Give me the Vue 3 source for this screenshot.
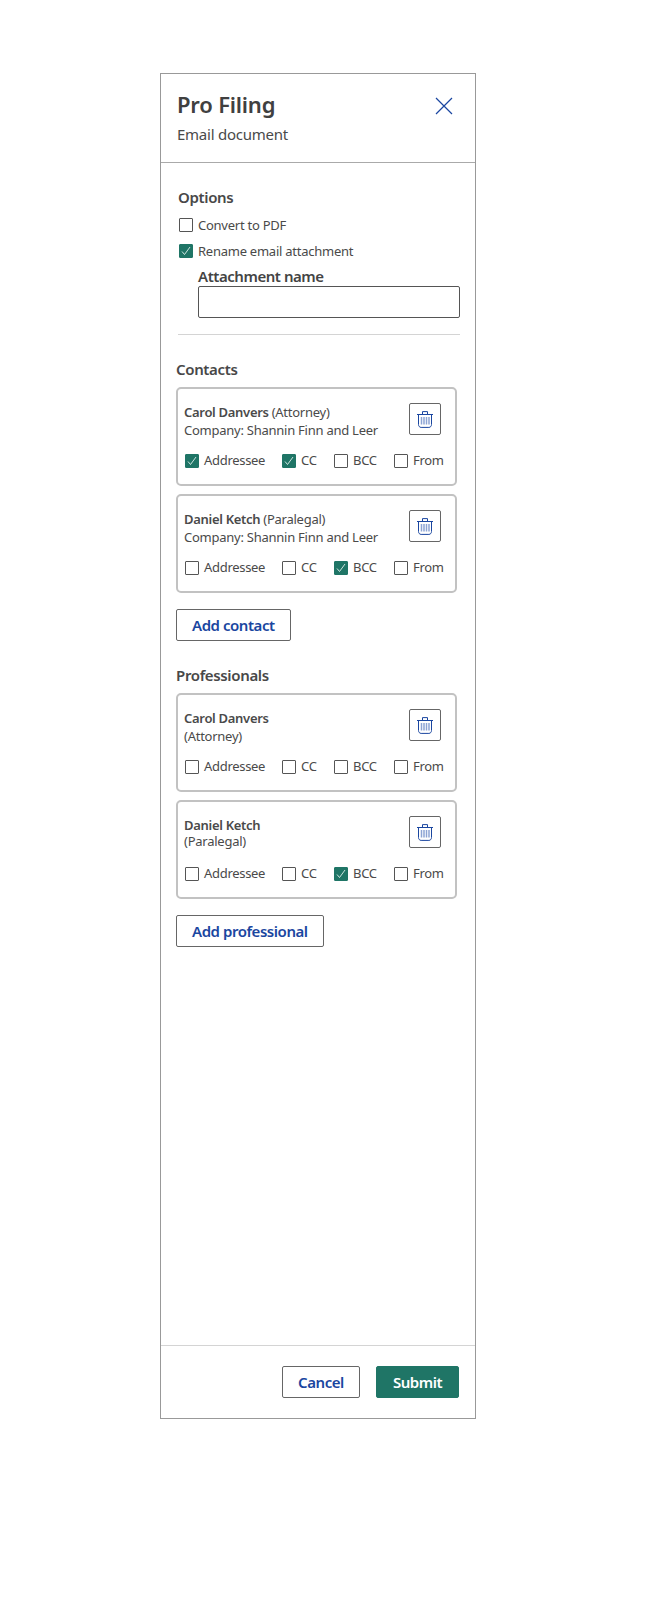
<script setup>
const contacts = [
  { id: 1, name: 'Carol Danvers', inline: true, role: '(Attorney)', sub: 'Company: Shannin Finn and Leer', checks: [true, true, false, false] },
  { id: 2, name: 'Daniel Ketch', inline: true, role: '(Paralegal)', sub: 'Company: Shannin Finn and Leer', checks: [false, false, true, false] }
]
const pros = [
  { id: 3, name: 'Carol Danvers', inline: false, role: '(Attorney)', checks: [false, false, false, false] },
  { id: 4, name: 'Daniel Ketch', inline: false, tight: true, role: '(Paralegal)', checks: [false, false, true, false] }
]
const sections = [
  { title: 'Contacts', people: contacts, add: 'Add contact' },
  { title: 'Professionals', people: pros, add: 'Add professional' }
]
const labels = ['Addressee', 'CC', 'BCC', 'From']
</script>

<template>
  <div class="panel">
    <header class="head">
      <div>
        <h1>Pro Filing</h1>
        <p>Email document</p>
      </div>
      <svg class="close" width="18" height="18" viewBox="0 0 18 18"><path d="M1 1l16 16M17 1L1 17" stroke="#1a46a0" stroke-width="1.2" fill="none"/></svg>
    </header>
    <div class="options">
      <h2>Options</h2>
      <label class="opt"><span class="box"></span>Convert to PDF</label>
      <label class="opt"><span class="box on"><svg viewBox="0 0 14 14"><path d="M3 7.500l2.500 3L11 3" stroke="#dff0ec" stroke-width="0.9" fill="none"/></svg></span>Rename email attachment</label>
      <div class="attach">
        <div class="attach-label">Attachment name</div>
        <div class="input"></div>
      </div>
      <div class="rule"></div>
    </div>
    <section v-for="s in sections" :key="s.title" class="group">
      <h2>{{ s.title }}</h2>
      <div v-for="p in s.people" :key="p.id" class="card">
        <div class="top">
          <div class="who" :class="{ tight: p.tight }">
            <div><b>{{ p.name }}</b><span v-if="p.inline" class="role">{{ p.role }}</span></div>
            <div>{{ p.inline ? p.sub : p.role }}</div>
          </div>
          <button class="trash" aria-label="Delete">
            <svg width="16" height="17" viewBox="0 0 16 17" fill="none">
              <path d="M5.500 3V.6h5V3M0 3.500h16" stroke="#1a46a0" stroke-width="1"/>
              <path d="M1.500 3.500v10c0 1.500 1 2.900 2.600 2.900h7.800c1.600 0 2.600-1.400 2.600-2.900v-10" stroke="#1a46a0" stroke-width="1"/>
              <path d="M4.500 6v7.500M7 6v7.500M9.500 6v7.500M12 6v7.500" stroke="#8da4d4" stroke-width="1.500"/>
            </svg>
          </button>
        </div>
        <div class="checks">
          <label v-for="(l, i) in labels" :key="l" class="chk">
            <span class="box" :class="{ on: p.checks[i] }">
              <svg v-if="p.checks[i]" viewBox="0 0 14 14"><path d="M3 7.500l2.500 3L11 3" stroke="#dff0ec" stroke-width="0.9" fill="none"/></svg>
            </span>{{ l }}
          </label>
        </div>
      </div>
      <button class="btn add">{{ s.add }}</button>
    </section>
    <footer class="foot">
      <button class="btn cancel">Cancel</button>
      <button class="btn submit">Submit</button>
    </footer>
  </div>
</template>

<style scoped>
.panel {
  box-sizing: border-box;
  width: 316px;
  height: 1346px;
  margin: 73px 0 205px 160px;
  border: 1px solid #999;
  display: flex;
  flex-direction: column;
  font-family: "Noto Sans", "Open Sans", sans-serif;
  color: #4a4a4a;
  background: #fff;
}
.head {
  height: 89px;
  box-sizing: border-box;
  flex: none;
  border-bottom: 1px solid #aaa;
  padding: 15px 22px 0 16px;
  display: flex;
  justify-content: space-between;
  align-items: flex-start;
}
h1 { margin: 0; font-size: 22px; line-height: 30px; font-weight: 600; letter-spacing: -0.2px; color: #404040; }
.head p { margin: 5px 0 0; font-size: 15px; line-height: 20px; letter-spacing: -0.25px; }
.close { margin-top: 8px; }
h2 { margin: 0; font-size: 15px; line-height: 20px; font-weight: 600; letter-spacing: -0.35px; color: #484848; }
.options { padding: 24px 15px 0 17px; flex: none; }
.opt { display: flex; align-items: center; height: 26px; font-size: 13px; letter-spacing: -0.25px; }
.options h2 { margin-bottom: 5px; }
.opt .box { margin: 0 5px 0 1px; }
.box {
  box-sizing: border-box;
  flex: none;
  width: 14px;
  height: 14px;
  border: 1px solid #555;
  border-radius: 1px;
  background: #fff;
  display: block;
}
.box.on { background: #1f7566; border-color: #1f7566; }
.box svg { display: block; width: 14px; height: 14px; margin: -1px; }
.attach { padding-left: 20px; }
.attach-label { font-size: 15px; line-height: 16px; font-weight: 600; letter-spacing: -0.45px; margin: 4px 0 2px; color: #444; }
.input { height: 32px; box-sizing: border-box; border: 1px solid #555; border-radius: 2px; }
.rule { height: 1px; background: #d4d4d4; margin-top: 16px; }
.group { padding: 0 18px 0 15px; margin-top: 24px; flex: none; }
.group h2 { margin-bottom: 8px; }
.card {
  box-sizing: border-box;
  height: 99px;
  border: 2px solid #c2c2c2;
  border-radius: 5px;
  padding: 14px 14px 0 6px;
  margin-bottom: 8px;
}
.top { display: flex; justify-content: space-between; align-items: flex-start; height: 48px; }
.who { font-size: 13px; line-height: 18px; letter-spacing: -0.25px; }
.who.tight { line-height: 16px; padding-top: 1px; }
.who b { font-weight: 600; letter-spacing: -0.3px; }
.role { margin-left: 3px; }
.trash {
  box-sizing: border-box;
  width: 32px;
  height: 32px;
  padding: 0;
  background: #fff;
  border: 1px solid #666;
  border-radius: 2px;
  display: flex;
  align-items: center;
  justify-content: center;
}
.checks { display: grid; grid-template-columns: 97px 52px 60px auto; margin-left: 1px; }
.chk { display: flex; align-items: center; gap: 5px; font-size: 13px; letter-spacing: -0.3px; height: 18px; white-space: nowrap; }
.chk .box { margin-top: 2px; }
.btn {
  box-sizing: border-box;
  height: 32px;
  padding: 0 15px;
  background: #fff;
  border: 1px solid #666;
  border-radius: 2px;
  color: #1a46a0;
  font: 600 15px/20px "Noto Sans", "Open Sans", sans-serif;
  letter-spacing: -0.45px;
}
.add { display: block; margin-top: 16px; }
.cancel { width: 78px; padding: 0; }
.submit { width: 83px; padding: 0; background: #1f7566; border-color: #1f7566; color: #fff; }
.foot {
  margin-top: auto;
  height: 73px;
  box-sizing: border-box;
  flex: none;
  border-top: 1px solid #d4d4d4;
  padding: 20px 16px 0 0;
  display: flex;
  justify-content: flex-end;
  gap: 16px;
}
</style>

<style>
html, body { background: #fff; }
</style>
